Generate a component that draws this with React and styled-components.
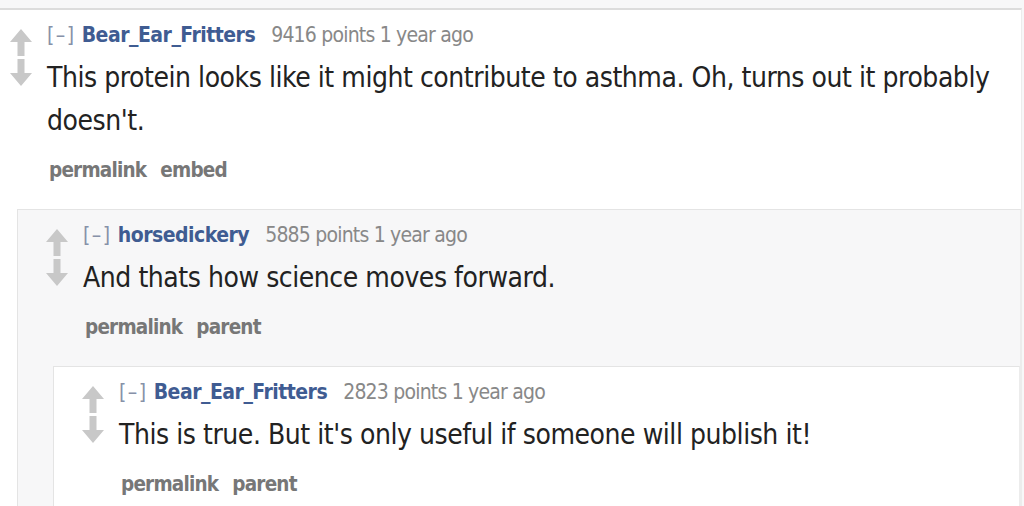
import React from "react";
import styled, { createGlobalStyle } from "styled-components";

const Global = createGlobalStyle`
  html, body { margin: 0; padding: 0; }
  body {
    background: #f7f7f8;
    font-family: "DejaVu Sans Condensed", "DejaVu Sans", Verdana, sans-serif;
    overflow: hidden;
  }
`;

const Page = styled.div`
  width: 1024px;
  height: 506px;
  overflow: hidden;
  padding-top: 8px;
  box-sizing: border-box;
`;

const Thread = styled.div`
  margin-left: -19px;
  margin-right: 2px;
`;

const Box = styled.div`
  background: ${(p) => (p.$even ? "#f7f7f8" : "#ffffff")};
  border: 1px solid #e4e4e4;
  border-top: ${(p) => (p.$top ? "2px solid #dcdcdc" : "1px solid #e4e4e4")};
  border-bottom: none;
  border-right: 1px solid #ececec;
`;

const Entry = styled.div`
  display: flex;
  align-items: flex-start;
  padding: 12px 0 26px 28px;
  gap: 15px;
`;

const Arrows = styled.div`
  display: flex;
  flex-direction: column;
  gap: 3px;
  padding-top: 7px;
  flex: none;
`;

const Main = styled.div`
  flex: 1;
  min-width: 0;
`;

const Tagline = styled.div`
  font-size: 21px;
  line-height: 26px;
  letter-spacing: -0.8px;
  color: #888;
  white-space: nowrap;
`;

const Expand = styled.span`
  color: #8791a8;
  letter-spacing: 1.5px;
  margin-right: 6px;
`;

const Author = styled.span`
  color: #3f5c92;
  font-weight: bold;
  letter-spacing: -0.5px;
  margin-right: 16px;
`;

const Body = styled.div`
  font-size: 28px;
  line-height: 43px;
  letter-spacing: -0.45px;
  color: #222;
  padding-top: 8px;
  padding-right: 20px;
`;

const Buttons = styled.div`
  display: flex;
  gap: 14px;
  padding-top: 15px;
  padding-left: 2px;
  font-size: 20.5px;
  line-height: 26px;
  letter-spacing: -0.8px;
  font-weight: bold;
  color: #777;
`;

const Children = styled.div`
  margin-left: 35px;
`;

const Arrow = ({ down }) => (
  <svg width="22" height="27" viewBox="0 0 22 27" style={{ display: "block" }}>
    <path
      d={
        down
          ? "M7.5 0 H14.5 V14 H22 L11 27 L0 14 H7.5 Z"
          : "M11 0 L22 13 H14.5 V27 H7.5 V13 H0 Z"
      }
      fill="#c8c8c8"
    />
  </svg>
);

const data = {
  author: "Bear_Ear_Fritters",
  points: 9416,
  body: "This protein looks like it might contribute to asthma. Oh, turns out it probably doesn't.",
  buttons: ["permalink", "embed"],
  children: [
    {
      author: "horsedickery",
      points: 5885,
      body: "And thats how science moves forward.",
      buttons: ["permalink", "parent"],
      children: [
        {
          author: "Bear_Ear_Fritters",
          points: 2823,
          body: "This is true. But it's only useful if someone will publish it!",
          buttons: ["permalink", "parent"],
          children: [],
        },
      ],
    },
  ],
};

function Comment({ c, depth }) {
  return (
    <Box $even={depth % 2 === 1} $top={depth === 0}>
      <Entry>
        <Arrows>
          <Arrow />
          <Arrow down />
        </Arrows>
        <Main>
          <Tagline>
            <Expand>[–]</Expand>
            <Author>{c.author}</Author>
            {c.points} points 1 year ago
          </Tagline>
          <Body>{c.body}</Body>
          <Buttons>
            {c.buttons.map((b) => (
              <span key={b}>{b}</span>
            ))}
          </Buttons>
        </Main>
      </Entry>
      {c.children.length > 0 && (
        <Children>
          {c.children.map((ch, i) => (
            <Comment key={i} c={ch} depth={depth + 1} />
          ))}
        </Children>
      )}
    </Box>
  );
}

export default function App() {
  return (
    <>
      <Global />
      <Page>
        <Thread>
          <Comment c={data} depth={0} />
        </Thread>
      </Page>
    </>
  );
}
